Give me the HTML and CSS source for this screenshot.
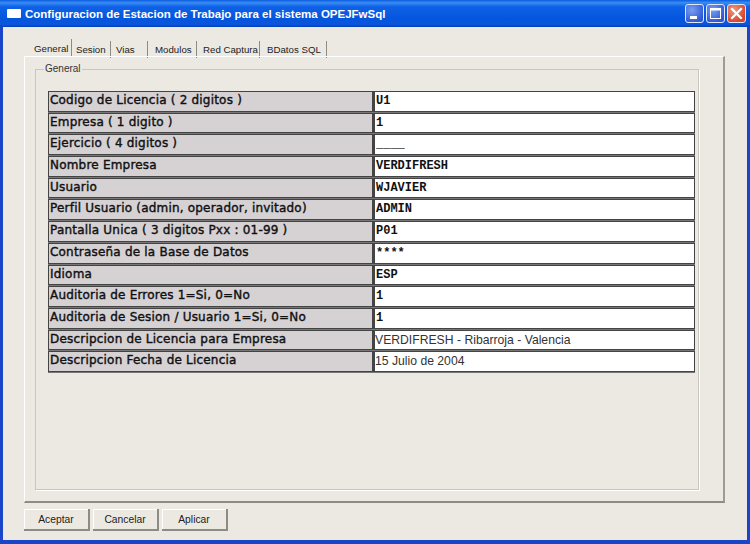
FILE: index.html
```html
<!DOCTYPE html>
<html lang="es">
<head>
<meta charset="utf-8">
<title>Configuracion de Estacion de Trabajo</title>
<link rel="stylesheet" href="styles.css">
</head>
<body>
<div class="window">
  <header class="titlebar">
    <span class="appicon"></span>
    <span class="title">Configuracion de Estacion de Trabajo para el sistema OPEJFwSql</span>
    <div class="controls">
      <span class="ctl"><svg viewBox="0 0 19 19" width="19" height="19"><rect x="5" y="12" width="7" height="3" fill="#fff"/></svg></span>
      <span class="ctl"><svg viewBox="0 0 19 19" width="19" height="19"><rect x="4.5" y="4.5" width="10" height="10" fill="none" stroke="#fff" stroke-width="1"/><rect x="4" y="4" width="11" height="2.5" fill="#fff"/></svg></span>
      <span class="ctl close"><svg viewBox="0 0 19 19" width="19" height="19"><path d="M5 5 L14 14 M14 5 L5 14" stroke="#fff" stroke-width="2.2" stroke-linecap="square"/></svg></span>
    </div>
  </header>
  <main class="client">
    <nav class="tabs">
      <span class="tab active w1">General</span>
      <span class="tab w2">Sesion</span>
      <span class="tab w3">Vias</span>
      <span class="tab w4">Modulos</span>
      <span class="tab w5">Red Captura</span>
      <span class="tab w6">BDatos SQL</span>
    </nav>
    <section class="panel">
      <fieldset class="group">
        <legend>General</legend>
        <div class="grid">
          <div class="lab">Codigo de Licencia ( 2 digitos )</div><div class="val">U1</div>
          <div class="lab">Empresa ( 1 digito )</div><div class="val">1</div>
          <div class="lab">Ejercicio ( 4 digitos )</div><div class="val">____</div>
          <div class="lab">Nombre Empresa</div><div class="val">VERDIFRESH</div>
          <div class="lab">Usuario</div><div class="val">WJAVIER</div>
          <div class="lab">Perfil Usuario (admin, operador, invitado)</div><div class="val">ADMIN</div>
          <div class="lab">Pantalla Unica ( 3 digitos Pxx : 01-99 )</div><div class="val">P01</div>
          <div class="lab">Contraseña de la Base de Datos</div><div class="val">****</div>
          <div class="lab">Idioma</div><div class="val">ESP</div>
          <div class="lab">Auditoria de Errores 1=Si, 0=No</div><div class="val">1</div>
          <div class="lab">Auditoria de Sesion / Usuario 1=Si, 0=No</div><div class="val">1</div>
          <div class="lab">Descripcion de Licencia para Empresa</div><div class="val plain">VERDIFRESH - Ribarroja - Valencia</div>
          <div class="lab">Descripcion Fecha de Licencia</div><div class="val plain">15 Julio de 2004</div>
        </div>
      </fieldset>
    </section>
    <footer class="buttons">
      <button class="btn">Aceptar</button>
      <button class="btn">Cancelar</button>
      <button class="btn">Aplicar</button>
    </footer>
  </main>
</div>
</body>
</html>
```

FILE: styles.css
```css
* { box-sizing: border-box; }
html, body { margin: 0; padding: 0; }
body { width: 750px; height: 544px; overflow: hidden; background: #fff; font-family: "Liberation Sans", Arial, sans-serif; }
.window { width: 750px; height: 544px; display: flex; flex-direction: column; background: #1a45c8; padding: 0 3px 4px 3px; }
.titlebar { height: 27px; margin: 0 -3px; padding: 0 4px 0 7px; display: flex; align-items: center; background: linear-gradient(180deg, #0a5ce0 0%, #3a8cf5 10%, #0f62e6 25%, #0455dd 70%, #0a56dc 90%, #0340b8 100%); }
.appicon { width: 14px; height: 9px; background: #fff; border-radius: 1px; margin-right: 4px; flex: none; }
.title { flex: 1; color: #fff; font: bold 11.5px "Liberation Sans", sans-serif; white-space: nowrap; }
.controls { display: flex; gap: 2px; }
.ctl { width: 19px; height: 19px; display: block; border: 1px solid #dfe8fb; border-radius: 3px; background: radial-gradient(circle at 35% 30%, #7a9ff0, #2f58d6 75%); overflow: hidden; }
.ctl svg { display: block; margin: -1px; }
.ctl.close { background: radial-gradient(circle at 35% 30%, #ec9a80, #d8432a 75%); }
.client { flex: 1; background: #ece9e2; padding: 13px 22px 0 21px; display: flex; flex-direction: column; }
.tabs { display: flex; height: 16px; padding-left: 6px; font-size: 9.7px; color: #222; gap: 3px; }
.tab { display: flex; align-items: center; border-right: 1px solid #8c8c84; height: 17px; margin-top: 1px; white-space: nowrap; }
.tab.active { margin-top: -1px; height: 18px; }
.w1 { width: 42px; padding-left: 4px; }
.w2 { width: 36px; padding-left: 1px; }
.w3 { width: 34px; padding-left: 2px; }
.w4 { width: 46px; padding-left: 4px; }
.w5 { width: 60px; padding-left: 3px; }
.w6 { width: 64px; padding-left: 4px; }
.panel { width: 701px; height: 447px; border: 1px solid #fff; border-right: 2px solid #9c9c94; border-bottom: 2px solid #8c8c84; padding: 7px 24px 11px 10px; }
.group { margin: 0; height: 100%; padding: 17px 2px 0 12px; min-width: 0; border: 1px solid #c9c7bd; box-shadow: 1px 1px 0 #fff; }
.group legend { font-size: 10px; color: #333; padding: 0 1px; margin-left: -4px; line-height: 10px; }
.grid { display: grid; grid-template-columns: 325px 322px; grid-auto-rows: 20.7px; row-gap: 1px; }
.lab { background: #d6d2d4; border: 1px solid #444; color: #111; font: 12px/14px "DejaVu Sans", sans-serif; -webkit-text-stroke: 0.4px #111; letter-spacing: 0.2px; padding: 1px 0 0 1px; white-space: nowrap; overflow: hidden; box-shadow: 0 1px 0 #777; }
.val { background: #fff; border: 1px solid #444; border-left-width: 2px; color: #111; font: bold 12px/16px "Liberation Mono", monospace; padding: 1px 0 0 1px; white-space: nowrap; box-shadow: 0 1px 0 #777; }
.val.plain { font: 12.2px/16px "Liberation Sans", sans-serif; color: #333; padding-left: 0; }
.buttons { display: flex; gap: 3px; margin-top: 6px; }
.btn { width: 66px; height: 22px; padding: 0; background: #ece9e2; border: 0; border-right: 2px solid #8c8c84; border-bottom: 2px solid #8c8c84; box-shadow: inset 1px 1px 0 #fff; font: 10.3px "Liberation Sans", sans-serif; color: #222; }
```
